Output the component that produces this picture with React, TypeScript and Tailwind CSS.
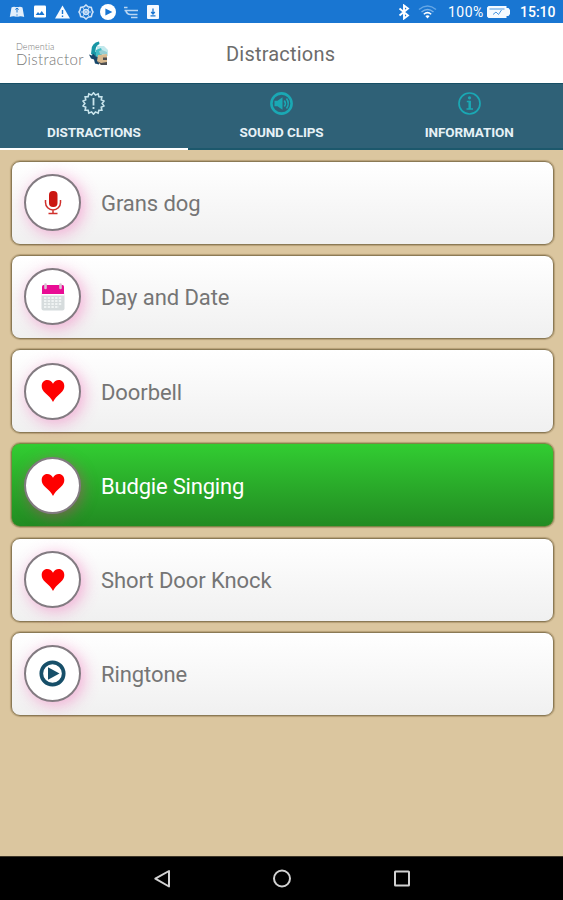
import { useState, ReactNode } from 'react'

type IconName = 'mic' | 'calendar' | 'heart' | 'play'

interface Distraction {
  id: number
  label: string
  icon: IconName
}

const distractions: Distraction[] = [
  { id: 1, label: 'Grans dog', icon: 'mic' },
  { id: 2, label: 'Day and Date', icon: 'calendar' },
  { id: 3, label: 'Doorbell', icon: 'heart' },
  { id: 4, label: 'Budgie Singing', icon: 'heart' },
  { id: 5, label: 'Short Door Knock', icon: 'heart' },
  { id: 6, label: 'Ringtone', icon: 'play' },
]

function StatusBar() {
  return (
    <div className="flex h-[23px] shrink-0 items-center justify-between bg-[#1976d2] pl-[9px] pr-2 text-white">
      <div className="flex items-center">
        <svg width="16" height="14" viewBox="0 0 16 14" fill="#e3effb">
          <path d="M2.500 2.500Q5 .8 7.700 2.500v9.500Q4.500 10.500.8 12Z" />
          <path d="M13.500 2.500Q11 .8 8.300 2.500v9.500Q11.500 10.500 15.200 12Z" />
          <path d="M7 2h2v7H7z" />
          <path d="M6.300 4.500L8 3l1.700 1.500M8 3v4.500" fill="none" stroke="#1976d2" strokeWidth="1" />
        </svg>
        <svg className="ml-[9px]" width="12" height="13" viewBox="0 0 12 13">
          <rect y=".5" width="12" height="12" rx="1.200" fill="#fff" />
          <path d="M1.700 10l2.300-3 1.600 1.800L7.800 6l2.700 4z" fill="#1976d2" />
        </svg>
        <svg className="ml-[9px]" width="15" height="14" viewBox="0 0 15 14">
          <path d="M7.500.5L15 13.500H0z" fill="#f5faff" />
          <path d="M7.500 5v4M7.500 10.500v1.500" stroke="#1976d2" strokeWidth="1.400" />
        </svg>
        <svg className="ml-2" width="16" height="16" viewBox="0 0 16 16" fill="none" stroke="#cfe3f8" strokeWidth="1.600">
          <path d="M8 1l2 1.800 3.300.6.8 3L15 8l-.9 1.600-.8 3-3.300.6L8 15l-2-1.800-3.300-.6-.8-3L1 8l.9-1.600.8-3 3.300-.6z" />
          <path d="M5 4l6 8M11 4l-6 8M3 8h10" strokeWidth=".9" />
          <circle cx="8" cy="8" r="2.500" />
        </svg>
        <svg className="ml-1.5" width="16" height="16" viewBox="0 0 16 16">
          <circle cx="8" cy="8" r="8" fill="#fff" />
          <path d="M5.400 4.500l7 3.500-7 3.500z" fill="#1976d2" />
        </svg>
        <svg className="ml-2" width="15" height="14" viewBox="0 0 15 14" fill="none" stroke="#b9d6f3" strokeWidth="1.700">
          <path d="M0 2.500h3.500M.5 5.500h13.500M5 9.500h8.500M7 12.500h6.500M2 6q1 3.500 4.500 3.500" />
        </svg>
        <svg className="ml-2" width="12" height="14" viewBox="0 0 12 14">
          <rect width="12" height="14" rx="1" fill="#f5faff" />
          <path d="M6 3.500v5M4.200 7L6 9l1.800-2M3.500 10.800h5" fill="none" stroke="#1976d2" strokeWidth="1.300" />
        </svg>
      </div>
      <div className="flex items-center">
        <svg width="12" height="16" viewBox="0 0 12 16" fill="none" stroke="#fff" strokeWidth="1.900">
          <path d="M1.500 4.500l8.500 7L6 14.500v-13l4 3-8.500 7" />
        </svg>
        <svg className="ml-[8px]" width="19" height="14" viewBox="0 0 19 14" fill="none" strokeWidth="1.500">
          <path d="M1 4.500Q9.500-2.500 18 4.500" stroke="#64a6e6" />
          <path d="M3.500 7Q9.500 2 15.500 7" stroke="#78b1e9" />
          <path d="M5.800 9.300Q9.500 6 13.200 9.300" stroke="#fff" />
          <path d="M7.300 11l2.200 2.500 2.200-2.500q-2.200-1.500-4.400 0z" fill="#fff" />
        </svg>
        <span className="ml-[11px] w-[36px] text-sm leading-none tracking-[0.5px]">100%</span>
        <svg className="ml-[3px]" width="23" height="12" viewBox="0 0 23 12">
          <path d="M1.500 0h18v2H21.500L23 4v4l-1.500 2h-2v2h-18L0 10.500v-9z" fill="#f5faff" />
          <path d="M2.500 3h15M14.500 4L11.500 8.500 9 6 6 8.500" fill="none" stroke="#4b97e0" />
        </svg>
        <span className="ml-[10px] w-[35px] text-sm font-medium leading-none">15:10</span>
      </div>
    </div>
  )
}

function Logo() {
  return (
    <div className="flex items-center">
      <div className="w-[70px] font-[Lato] font-light text-[#777]">
        <div className="h-[11px] text-[9px] leading-[11px] tracking-[0.1px]">Dementia</div>
        <div className="h-[14px] text-[15px] leading-[14px] tracking-[0.35px]">Distractor</div>
      </div>
      <svg className="ml-[3px]" width="20" height="25" viewBox="0 0 20 25">
        <path d="M8 5l7 0 4 4v6H7z" fill="#c2e8ec" />
        <path d="M10 .5Q2.500 2 2.500 9L2 13l6 3 2-4-3.500-1Q6 5 10.500 3z" fill="#1896a5" />
        <path d="M7 9l5-2 2 5-4 5-3-2z" fill="#43bcc5" />
        <path d="M0 13.500l3 1 1-2 3 3 3 1v7l-4-1-1-4-3-1z" fill="#17476a" />
        <path d="M9 14l9-1v10l-6 1-4-4z" fill="#d8b98f" />
        <path d="M14 16.500h4v2.500h-4zM8 20l4 2 6-1v3h-6z" fill="#4e4f51" />
        <path d="M10 10l3-1 5 2v2h-7z" fill="#94ced4" />
      </svg>
    </div>
  )
}

function Header() {
  return (
    <div className="flex h-[60px] shrink-0 items-center bg-white pl-4">
      <div className="w-[210px]">
        <Logo />
      </div>
      <h1 className="pt-0.5 text-xl tracking-[0.2px] text-[#6c6c6c]">Distractions</h1>
    </div>
  )
}

const badgePoints = Array.from({ length: 28 }, (_, i) => {
  const r = i % 2 === 0 ? 10.7 : 8.6
  const a = (i * Math.PI) / 14
  return `${11.5 + r * Math.sin(a)},${11.5 - r * Math.cos(a)}`
}).join(' ')

const tabs: { name: string; icon: ReactNode }[] = [
  {
    name: 'DISTRACTIONS',
    icon: (
      <svg width="23" height="23" viewBox="0 0 23 23" fill="none" stroke="#c8e4ec" strokeWidth="1.600">
        <polygon points={badgePoints} />
        <path d="M11.500 6v7.500M11.500 15v2" strokeWidth="1.800" />
      </svg>
    ),
  },
  {
    name: 'SOUND CLIPS',
    icon: (
      <svg width="23" height="23" viewBox="0 0 23 23" fill="none" stroke="#1aa8b4" strokeWidth="2.600">
        <circle cx="11.500" cy="11.500" r="10.100" />
        <path d="M4.500 8.800h3L12.500 5.300v12.400l-5-3.500h-3z" fill="#1aa8b4" stroke="none" />
        <path d="M14.300 8.500q2.200 3 0 6M16.500 6.500q3.500 5 0 10" strokeWidth="1.600" />
      </svg>
    ),
  },
  {
    name: 'INFORMATION',
    icon: (
      <svg width="23" height="23" viewBox="0 0 23 23" fill="none" stroke="#1aa8b4" strokeWidth="1.700">
        <circle cx="11.500" cy="11.500" r="10.500" />
        <circle cx="11.500" cy="5.800" r="1.600" fill="#1aa8b4" stroke="none" />
        <path d="M8.800 9.500h3M8.500 17h6.500" strokeWidth="1.500" />
        <path d="M11.700 8.800v8.200" strokeWidth="2.500" />
      </svg>
    ),
  },
]

function TabBar() {
  const [active, setActive] = useState('DISTRACTIONS')

  return (
    <div className="flex h-[67px] shrink-0 border-t border-[#174f65] bg-[#2f6177]">
      {tabs.map((tab) => (
        <button
          key={tab.name}
          onClick={() => setActive(tab.name)}
          className={`flex flex-1 flex-col items-center border-b-2 pt-2 ${
            active === tab.name ? 'border-white' : 'border-[#1c586c]'
          }`}
        >
          {tab.icon}
          <span className="mt-[9px] text-[13.5px] font-bold leading-4 tracking-[-0.12px] text-[#e6f1f6]">
            {tab.name}
          </span>
        </button>
      ))}
    </div>
  )
}

function ItemIcon({ name }: { name: IconName }) {
  if (name === 'mic') {
    return (
      <svg width="18" height="25" viewBox="0 0 18 25" fill="none" stroke="#d0302c" strokeWidth="1.500">
        <rect x="5" y="1" width="8.500" height="16" rx="4" fill="#cb1712" stroke="none" />
        <path d="M1.500 10v2.500a7.500 7.500 0 0015 0V10M9 20v3M4.500 23.500h9" />
      </svg>
    )
  }
  if (name === 'calendar') {
    return (
      <svg width="24" height="28" viewBox="0 0 24 28">
        <rect x=".5" y="9" width="23" height="18.500" rx="2" fill="#d6dcdd" />
        <path d="M1 3.500q0-1.500 1.500-1.500h19q1.500 0 1.500 1.500V11H1z" fill="#e90c94" />
        <path d="M.5 11h23v1.500H.5z" fill="#fff" />
        <path
          d="M3 15h18M3 18h18M3 21h18M3 24h15"
          stroke="#f8fafa"
          strokeWidth="1.600"
          strokeDasharray="2.400 1.300"
        />
        <path d="M4.500 1.500v3.500M19.500 1.500v3.500" stroke="#d9c3d1" strokeWidth="2.600" strokeLinecap="round" />
      </svg>
    )
  }
  if (name === 'heart') {
    return (
      <svg width="24" height="24" viewBox="0 0 24 24">
        <path
          d="M12 23C10.500 19.500 8 17.500 4.500 14.200 1.800 11.700.7 9.800.7 7 .7 3.400 3 1 6.200 1 8.800 1 11 2.300 12 4.800 13 2.300 15.200 1 17.800 1 21 1 23.300 3.400 23.300 7c0 2.800-1.100 4.700-3.800 7.200C16 17.500 13.500 19.500 12 23z"
          fill="#fe0000"
        />
      </svg>
    )
  }
  return (
    <svg width="27" height="27" viewBox="0 0 27 27">
      <circle cx="13.500" cy="13.500" r="11.200" fill="none" stroke="#174f69" strokeWidth="3.700" />
      <path d="M9 7.300l11.500 6.200L9 19.700z" fill="#174f69" />
    </svg>
  )
}

interface DistractionCardProps {
  item: Distraction
  selected: boolean
  onSelect: (id: number) => void
}

function DistractionCard({ item, selected, onSelect }: DistractionCardProps) {
  return (
    <button
      onClick={() => onSelect(item.id)}
      className={`flex h-[84px] items-center rounded-[9px] border pl-3 text-left shadow-[0_0_1px_1px_rgba(125,100,60,0.4)] ${
        selected
          ? 'border-[#7e8846] bg-linear-to-b from-[#32cd32] to-[#228b22] tracking-[-0.2px] text-white'
          : 'border-[#8b7a55] bg-linear-to-b from-white to-[#f0f0f0] tracking-[-0.08px] text-[#757575]'
      }`}
    >
      <span
        className={`flex size-[57px] items-center justify-center rounded-full border-2 border-[#827b81] bg-white ${
          selected ? 'shadow-[2px_3px_14px_rgba(199,60,120,0.5)]' : 'shadow-[3px_3px_16px_rgba(240,80,170,0.45)]'
        }`}
      >
        <ItemIcon name={item.icon} />
      </span>
      <span className="ml-5 pt-[3px] text-[22px] leading-7">{item.label}</span>
    </button>
  )
}

function NavBar() {
  return (
    <div className="flex h-11 shrink-0 items-center justify-center gap-[102px] border-t border-[#3d3527] bg-black">
      <svg width="18" height="20" viewBox="0 0 18 20" fill="none" stroke="#d2d2d2" strokeWidth="2">
        <path d="M16 2v15.500L2.300 9.700z" strokeLinejoin="round" />
      </svg>
      <svg width="18" height="20" viewBox="0 0 18 20" fill="none" stroke="#d2d2d2" strokeWidth="2">
        <circle cx="9" cy="9.500" r="8" />
      </svg>
      <svg width="18" height="20" viewBox="0 0 18 20" fill="none" stroke="#d2d2d2" strokeWidth="2">
        <rect x="2" y="2.500" width="14" height="14" rx=".5" />
      </svg>
    </div>
  )
}

export default function App() {
  const [selectedId, setSelectedId] = useState(4)

  return (
    <div className="flex h-screen w-full flex-col bg-[#dbc69f] font-[Roboto,sans-serif]">
      <StatusBar />
      <Header />
      <TabBar />
      <div className="flex flex-1 flex-col gap-[10.3px] pl-[11px] pr-[9.500px] pt-[10.500px]">
        {distractions.map((item) => (
          <DistractionCard
            key={item.id}
            item={item}
            selected={item.id === selectedId}
            onSelect={setSelectedId}
          />
        ))}
      </div>
      <NavBar />
    </div>
  )
}
